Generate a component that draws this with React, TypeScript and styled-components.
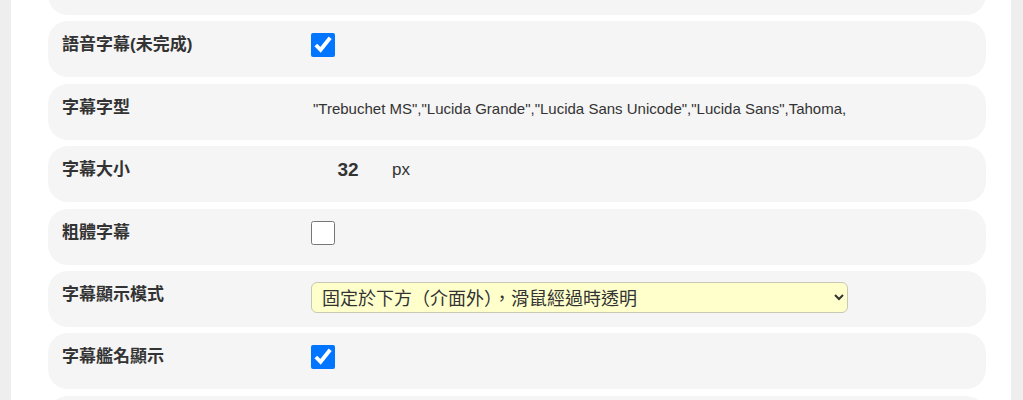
import styled, { createGlobalStyle } from "styled-components";

const GlobalStyle = createGlobalStyle`
  html, body {
    margin: 0;
    padding: 0;
    background: #eeeeee;
    overflow: hidden;
  }
  body {
    font-family: "Liberation Sans", "Noto Sans CJK TC", sans-serif;
    color: #333;
  }
`;

type RowKind = "check" | "text" | "size" | "select";

interface Setting {
  label: string;
  kind: RowKind;
  checked?: boolean;
  value?: string;
}

const settings: Setting[] = [
  { label: "顯示字幕", kind: "check", checked: true },
  { label: "語音字幕(未完成)", kind: "check", checked: true },
  {
    label: "字幕字型",
    kind: "text",
    value: '"Trebuchet MS","Lucida Grande","Lucida Sans Unicode","Lucida Sans",Tahoma,',
  },
  { label: "字幕大小", kind: "size", value: "32" },
  { label: "粗體字幕", kind: "check", checked: false },
  { label: "字幕顯示模式", kind: "select", value: "固定於下方（介面外），滑鼠經過時透明" },
  { label: "字幕艦名顯示", kind: "check", checked: true },
  { label: "字幕背景", kind: "check", checked: false },
];

const renderControl = (s: Setting) => {
  switch (s.kind) {
    case "check":
      return <CheckBox type="checkbox" defaultChecked={s.checked} />;
    case "text":
      return <FontText>{s.value}</FontText>;
    case "size":
      return (
        <SizeGroup>
          <SizeInput type="text" defaultValue={s.value} />
          <Unit>px</Unit>
        </SizeGroup>
      );
    case "select":
      return (
        <ModeSelect defaultValue={s.value}>
          <option>{s.value}</option>
          <option>固定於下方（介面內）</option>
          <option>浮動</option>
        </ModeSelect>
      );
  }
};

const App = () => {
  return (
    <>
      <GlobalStyle />
      <Panel>
        <RowList>
          {settings.map((s, i) => (
            <Row key={i}>
              <Label>{s.label}</Label>
              <Control>{renderControl(s)}</Control>
            </Row>
          ))}
        </RowList>
      </Panel>
    </>
  );
};

export default App;

const Panel = styled.div`
  display: flow-root;
  width: 1000px;
  height: 100vh;
  overflow: hidden;
  margin-left: 11px;
  background: #ffffff;
  box-sizing: border-box;
  padding: 0 25px 0 37px;
`;

const RowList = styled.div`
  display: flex;
  flex-direction: column;
  gap: 6.4px;
  margin-top: -41px;
`;

const Row = styled.div`
  display: grid;
  grid-template-columns: 249px 1fr;
  align-items: start;
  flex: 0 0 auto;
  height: 56px;
  box-sizing: border-box;
  padding: 12px 14px 0;
  background: #f5f5f5;
  border-radius: 20px;
`;

const Label = styled.div`
  font-size: 17px;
  font-weight: bold;
  line-height: 24px;
  color: #333;
`;

const Control = styled.div`
  display: flex;
  align-items: center;
  min-height: 24px;
`;

const CheckBox = styled.input`
  width: 24px;
  height: 24px;
  margin: 0;
  accent-color: #0075ff;
`;

const FontText = styled.div`
  font-size: 15px;
  line-height: 24px;
  padding: 1px 0 0 2px;
  color: #333;
`;

const SizeGroup = styled.div`
  display: flex;
  align-items: center;
  gap: 7px;
  height: 24px;
`;

const SizeInput = styled.input`
  width: 74px;
  box-sizing: border-box;
  border: none;
  background: transparent;
  text-align: center;
  font-family: "Liberation Sans", sans-serif;
  font-size: 19px;
  font-weight: bold;
  color: #333;
  padding: 0;
  outline: none;
`;

const Unit = styled.span`
  font-size: 17px;
  color: #333;
`;

const ModeSelect = styled.select`
  width: 537px;
  height: 31px;
  margin-top: -1px;
  box-sizing: border-box;
  padding: 0 6px 0 6px;
  background: #ffffcc;
  border: 1px solid #c8c8b4;
  border-radius: 6px;
  font-family: "Noto Sans CJK TC", sans-serif;
  font-size: 18px;
  color: #333;
  outline: none;
`;
